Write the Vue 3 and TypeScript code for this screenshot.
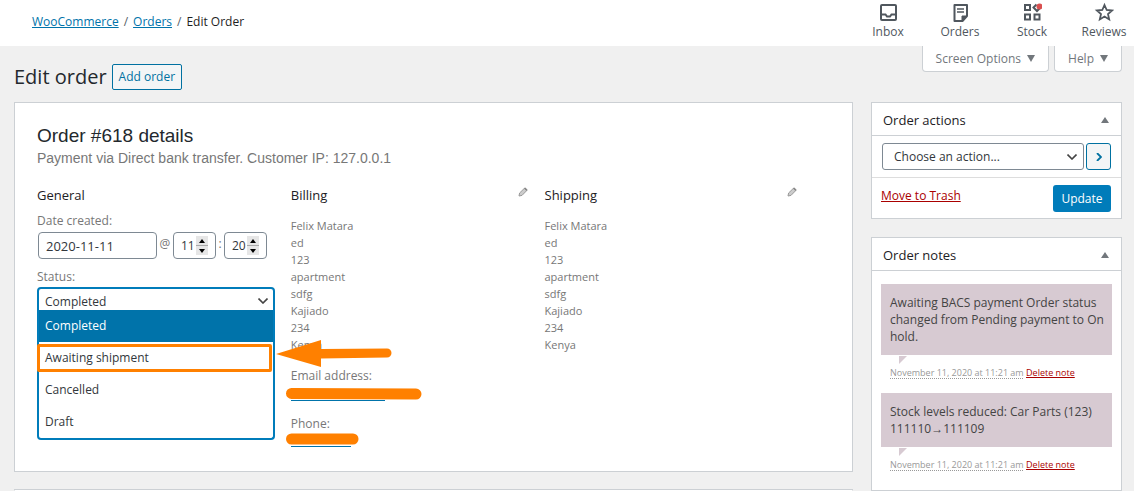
<script setup lang="ts">
import { ref } from 'vue'

const date = ref('2020-11-11')
const hour = ref(11)
const minute = ref(20)
const status = ref('Completed')
const action = ref('')
const statuses: string[] = ['Completed', 'Awaiting shipment', 'Cancelled', 'Draft']
const address: string[] = ['Felix Matara', 'ed', '123', 'apartment', 'sdfg', 'Kajiado', '234', 'Kenya']
const notes = [
  { id: 1, text: 'Awaiting BACS payment Order status changed from Pending payment to On hold.', time: 'November 11, 2020 at 11:21 am' },
  { id: 2, text: 'Stock levels reduced: Car Parts (123) 111110→111109', time: 'November 11, 2020 at 11:21 am' },
]
</script>

<template>
  <div class="page">
    <header class="topbar">
      <nav class="crumbs" aria-label="Breadcrumb">
        <a href="#woocommerce">WooCommerce</a><span class="sep">/</span>
        <a href="#orders">Orders</a><span class="sep">/</span>
        <span>Edit Order</span>
      </nav>
      <div class="activity">
        <button type="button">
          <svg viewBox="0 0 20 20" width="20" height="20" fill="none" stroke="#50575e" stroke-width="2">
            <rect x="3" y="3" width="15" height="15" rx="1" />
            <path d="M3 12.500h4.500l1.500 2h3l1.500-2H18" />
          </svg>
          <span>Inbox</span>
        </button>
        <button type="button">
          <svg viewBox="0 0 20 20" width="20" height="20" fill="none" stroke="#50575e" stroke-width="2">
            <path d="M4.500 3H17V14L12.500 19H4.500Z" stroke-linejoin="round" />
            <path d="M7 7h7M7 10h7" stroke-width="1.500" />
            <path d="M12 19v-5h5Z" fill="#50575e" stroke-width="1" />
          </svg>
          <span>Orders</span>
        </button>
        <button type="button">
          <svg viewBox="0 0 20 20" width="20" height="20" fill="none" stroke="#50575e" stroke-width="2">
            <rect x="3" y="3" width="5" height="5" />
            <rect x="3" y="12.500" width="5" height="5" />
            <rect x="12.500" y="12.500" width="5" height="5" />
            <path d="M14.500 2.500L11.500 5.500l3.500 3.500 3-3" />
            <circle cx="17.500" cy="4.500" r="3" fill="#d94f4f" stroke="none" />
          </svg>
          <span>Stock</span>
        </button>
        <button type="button">
          <svg viewBox="0 0 20 20" width="20" height="20" fill="none" stroke="#50575e" stroke-width="1.800">
            <path d="M10.500 3l2.200 5 5.400.5-4.100 3.600 1.200 5.300-4.700-2.800-4.700 2.800L7 12.100 2.900 8.500l5.400-.5z" />
          </svg>
          <span>Reviews</span>
        </button>
      </div>
    </header>

    <div class="headrow">
      <div class="titlebar">
        <h1>Edit order</h1>
        <a class="add" href="#add-order">Add order</a>
      </div>
      <div class="tabs">
        <button type="button">Screen Options <svg viewBox="0 0 8 7" width="8" height="7"><path d="M0 0h8L4 7z" fill="#72777c" /></svg></button>
        <button type="button">Help <svg viewBox="0 0 8 7" width="8" height="7"><path d="M0 0h8L4 7z" fill="#72777c" /></svg></button>
      </div>
    </div>

    <div class="content">
      <main class="main">
        <section class="card order">
          <h2>Order #618 details</h2>
          <p class="sub">Payment via Direct bank transfer. Customer IP: 127.0.0.1</p>
          <div class="columns">
            <div class="col">
              <h3>General</h3>
              <label class="lbl" for="date">Date created:</label>
              <div class="daterow">
                <input id="date" v-model="date" class="date" type="text" />
                <span class="at">@</span>
                <span class="num">
                  <input v-model="hour" type="number" aria-label="Hour" />
                  <span class="spin">
                    <button type="button" aria-label="Increase hour" @click="hour++"><svg viewBox="0 0 6 4" width="6" height="4"><path d="M0 4h6L3 0z" /></svg></button>
                    <button type="button" aria-label="Decrease hour" @click="hour--"><svg viewBox="0 0 6 4" width="6" height="4"><path d="M0 0h6L3 4z" /></svg></button>
                  </span>
                </span>
                <span class="colon">:</span>
                <span class="num">
                  <input v-model="minute" type="number" aria-label="Minute" />
                  <span class="spin">
                    <button type="button" aria-label="Increase minute" @click="minute++"><svg viewBox="0 0 6 4" width="6" height="4"><path d="M0 4h6L3 0z" /></svg></button>
                    <button type="button" aria-label="Decrease minute" @click="minute--"><svg viewBox="0 0 6 4" width="6" height="4"><path d="M0 0h6L3 4z" /></svg></button>
                  </span>
                </span>
              </div>
              <label class="lbl status-lbl" for="status">Status:</label>
              <div class="combo">
                <div class="select-wrap">
                  <select id="status" v-model="status">
                    <option v-for="s in statuses" :key="s">{{ s }}</option>
                  </select>
                  <svg class="chev" viewBox="0 0 10 6" width="10" height="6"><path d="M.5.5L5 5 9.500.5" fill="none" stroke="#444" stroke-width="1.600" /></svg>
                </div>
                <div class="options" role="listbox" aria-label="Status options">
                  <button
                    v-for="s in statuses" :key="s" type="button" role="option"
                    :aria-selected="s === status"
                    :class="{ chosen: s === status, marked: s === 'Awaiting shipment' }"
                    @click="status = s"
                  >{{ s }}</button>
                  <svg class="arrow" viewBox="0 0 116 28" width="116" height="28">
                    <path d="M0 14L45 0V9L111 8.500a4.500 4.500 0 0 1 0 9L45 18.500V27z" fill="#ff8000" />
                  </svg>
                </div>
              </div>
            </div>

            <div class="col">
              <div class="colhead">
                <h3>Billing</h3>
                <button class="edit" type="button" aria-label="Edit billing">
                  <svg viewBox="0 0 10 10" width="10" height="10"><path d="M1 9l.6-3L6.500 1.200l2.300 2.300L4 8.400z" fill="#ccc" stroke="#999" /><path d="M6 1.500L7.300.4 9.600 2.700 8.500 4z" fill="#888" /></svg>
                </button>
              </div>
              <address><span v-for="line in address" :key="line">{{ line }}</span></address>
              <div class="contact">
                <span class="lbl">Email address:</span>
                <a class="masked email" href="#email" aria-label="Email">
                  <svg class="scrawl" viewBox="0 0 138 14" width="138" height="14">
                    <path d="M6.500 6.500L131 7" stroke="#ff8000" stroke-width="11" stroke-linecap="round" />
                  </svg>
                </a>
              </div>
              <div class="contact">
                <span class="lbl">Phone:</span>
                <a class="masked phone" href="#phone" aria-label="Phone">
                  <svg class="scrawl" viewBox="0 0 74 12" width="74" height="12">
                    <path d="M6.500 6H68" stroke="#ff8000" stroke-width="11" stroke-linecap="round" />
                  </svg>
                </a>
              </div>
            </div>

            <div class="col">
              <div class="colhead">
                <h3>Shipping</h3>
                <button class="edit" type="button" aria-label="Edit shipping">
                  <svg viewBox="0 0 10 10" width="10" height="10"><path d="M1 9l.6-3L6.500 1.200l2.300 2.300L4 8.400z" fill="#ccc" stroke="#999" /><path d="M6 1.500L7.300.4 9.600 2.700 8.500 4z" fill="#888" /></svg>
                </button>
              </div>
              <address><span v-for="line in address" :key="line">{{ line }}</span></address>
            </div>
          </div>
        </section>
        <section class="card items"></section>
      </main>

      <aside class="side">
        <section class="card">
          <div class="cardhead"><h2>Order actions</h2><button type="button" aria-label="Toggle order actions"><svg viewBox="0 0 8 6" width="8" height="6"><path d="M0 6h8L4 0z" fill="#72777c" /></svg></button></div>
          <div class="actionrow">
            <div class="select-wrap">
              <select v-model="action" aria-label="Order action">
                <option value="">Choose an action...</option>
              </select>
              <svg class="chev" viewBox="0 0 10 6" width="10" height="6"><path d="M.5.5L5 5 9.500.5" fill="none" stroke="#444" stroke-width="1.600" /></svg>
            </div>
            <button class="go" type="button" aria-label="Apply"><svg viewBox="0 0 6 8" width="6" height="8"><path d="M1 0l4 4-4 4" fill="none" stroke="#0071a1" stroke-width="1.800" /></svg></button>
          </div>
          <div class="foot">
            <a class="trash" href="#trash">Move to Trash</a>
            <button class="update" type="button">Update</button>
          </div>
        </section>

        <section class="card">
          <div class="cardhead"><h2>Order notes</h2><button type="button" aria-label="Toggle order notes"><svg viewBox="0 0 8 6" width="8" height="6"><path d="M0 6h8L4 0z" fill="#72777c" /></svg></button></div>
          <ul class="notes">
            <li v-for="n in notes" :key="n.id">
              <div class="note">{{ n.text }}</div>
              <p class="meta"><abbr>{{ n.time }}</abbr> <a href="#delete-note">Delete note</a></p>
            </li>
          </ul>
        </section>
      </aside>
    </div>
  </div>
</template>

<style>
body { background: #f0f0f0; }
</style>

<style scoped>
* { box-sizing: border-box; }
.page { font: 12px/18px "Open Sans", "Noto Sans", sans-serif; color: #32373c; }
h1, h2, h3, p, ul { margin: 0; padding: 0; font-weight: 400; }
button, input, select { font: inherit; color: inherit; margin: 0; }
button { padding: 0; border: 0; background: none; cursor: pointer; }
svg { display: block; flex: none; }
a { color: #0073aa; }

.topbar { height: 46px; background: #fff; display: flex; justify-content: space-between; padding: 0 9px 0 32px; }
.crumbs { display: flex; align-items: center; height: 44px; color: #1e1e1e; }
.sep { margin: 0 5px; color: #555d66; }
.activity { display: grid; grid-template-columns: repeat(4, 42px); gap: 30px; padding-top: 2px; align-items: start; }
.activity button { display: flex; flex-direction: column; align-items: center; gap: 1px; color: #50575e; white-space: nowrap; }

.headrow { display: flex; justify-content: space-between; align-items: flex-start; height: 56px; padding: 0 12px 0 14px; }
.titlebar { display: flex; gap: 5px; padding-top: 18px; }
h1 { font-size: 20px; line-height: 26px; color: #23282d; }
.add { height: 26px; padding: 0 6px; border: 1px solid #0071a1; border-radius: 2px; background: #f3f5f6; color: #0071a1; line-height: 24px; text-decoration: none; }
.tabs { display: flex; gap: 5px; }
.tabs button { display: flex; align-items: center; gap: 6px; height: 26px; padding: 0 13px; border: 1px solid #ccd0d4; border-top: 0; border-radius: 0 0 4px 4px; background: #fff; color: #72777c; }

.content { display: flex; align-items: flex-start; gap: 18px; padding: 0 12px 0 14px; }
.main { flex: 1; min-width: 0; display: grid; gap: 17px; }
.side { flex: 0 0 251px; display: grid; gap: 18px; }
.card { background: #fff; border: 1px solid #ccd0d4; }
.order { padding: 21px 22px 24px; }
.items { height: 2px; border-bottom-color: #fff; }
.order h2 { font: 19px/24px "Liberation Sans", Arial, sans-serif; color: #23282d; }
.sub { font: 14px/20px "Liberation Sans", Arial, sans-serif; color: #777; }
.columns { display: grid; grid-template-columns: repeat(3, 32%); margin-top: 16px; }
.col { padding-right: 16px; min-width: 0; }
.col:last-child { padding-right: 0; }
.col h3 { font-size: 13px; line-height: 22px; color: #1d2125; font-weight: 500; }
.lbl { display: block; color: #777; }
.col > .lbl { margin-top: 6px; }
.daterow { display: flex; align-items: flex-start; margin-top: 2px; padding-left: 1px; color: #777; }
.date { width: 119px; height: 27px; padding: 0 7px; border: 1px solid #7e8993; border-radius: 4px; background: #fff; color: #32373c; font-size: 13px; }
.at { width: 16px; text-align: center; line-height: 24px; }
.colon { width: 8px; text-align: center; line-height: 24px; }
.num { display: flex; align-items: center; width: 43px; height: 27px; padding-left: 7px; border: 1px solid #7e8993; border-radius: 4px; background: #fff; color: #32373c; }
.num input { width: 15px; height: 22px; padding: 0; border: 0; background: none; appearance: textfield; outline: 0; }
.num input::-webkit-inner-spin-button { appearance: none; margin: 0; }
.spin { display: grid; gap: 1px; width: 12px; background: #aaa; }
.spin button { display: flex; align-items: center; justify-content: center; height: 9px; background: #e6e6e6; }
.col > .status-lbl { margin-top: 9px; }

.select-wrap { position: relative; flex: 1; }
.select-wrap select { display: block; width: 100%; height: 27px; padding: 0 24px 0 11px; border: 1px solid #7e8993; border-radius: 3px; background: #fff; appearance: none; }
.chev { position: absolute; right: 7px; top: 11px; pointer-events: none; }
.combo { position: relative; margin-top: 1px; }
.combo .select-wrap select { height: 30px; padding: 0 24px 0 6px; border: 2px solid #007cba; border-radius: 4px; }
.options { position: absolute; left: 0; right: 0; top: 23px; border: 2px solid #007cba; border-top: 0; border-radius: 0 0 4px 4px; background: #fff; }
.options button { display: block; width: 100%; height: 32px; padding: 0 6px; text-align: left; }
.options .chosen { background: #0073aa; color: #fff; }
.options .marked { position: relative; }
.options .marked::after { content: ""; position: absolute; inset: 2px 1px 2px -2px; border: 3px solid #ff8000; border-radius: 2px; }
.arrow { position: absolute; left: 237px; top: 30px; z-index: 2; }

.colhead { display: flex; justify-content: space-between; }
.edit { height: 16px; padding-right: 1px; }
address { margin-top: 11px; font-style: normal; font-size: 11px; color: #777; }
address span { display: block; line-height: 17px; }
.contact { margin-top: 14px; }
.contact .lbl { font-size: 12px; }
.masked { position: relative; display: block; height: 14px; border-bottom: 1px solid #0073aa; }
.email { width: 94px; height: 16px; }
.phone { width: 60px; }
.scrawl { position: absolute; left: -6px; top: 2px; }
.phone .scrawl { top: 0; }

.cardhead { display: flex; justify-content: space-between; align-items: center; height: 33px; padding: 1px 12px 0 11px; border-bottom: 1px solid #ccd0d4; }
.cardhead h2 { font-size: 13px; line-height: 20px; color: #1d2125; font-weight: 500; }
.actionrow { display: flex; gap: 2px; padding: 7px 10px; border-bottom: 1px solid #ddd; }
.go { display: flex; align-items: center; justify-content: center; width: 25px; height: 27px; border: 1px solid #0071a1; border-radius: 3px; background: #f3f5f6; }
.foot { display: flex; justify-content: space-between; align-items: flex-start; padding: 7px 10px 6px 9px; }
.trash { color: #a00; line-height: 22px; }
.update { width: 58px; height: 27px; border-radius: 3px; background: #007cba; color: #fff; }
.notes { list-style: none; padding: 13px 9px 16px; display: grid; gap: 11px; }
.note { position: relative; padding: 10px 2px 10px 9px; background: #d7cad2; color: #444; line-height: 17px; }
.note::after { content: ""; position: absolute; left: 18px; bottom: -9px; border: solid transparent; border-width: 8px 8px 0 0; border-top-color: #d7cad2; }
.meta { margin-top: 9px; padding-left: 9px; font-size: 9px; line-height: 18px; color: #999; }
.meta abbr { text-decoration: underline dotted; text-underline-offset: 2px; }
.meta a { color: #a00; }
</style>
